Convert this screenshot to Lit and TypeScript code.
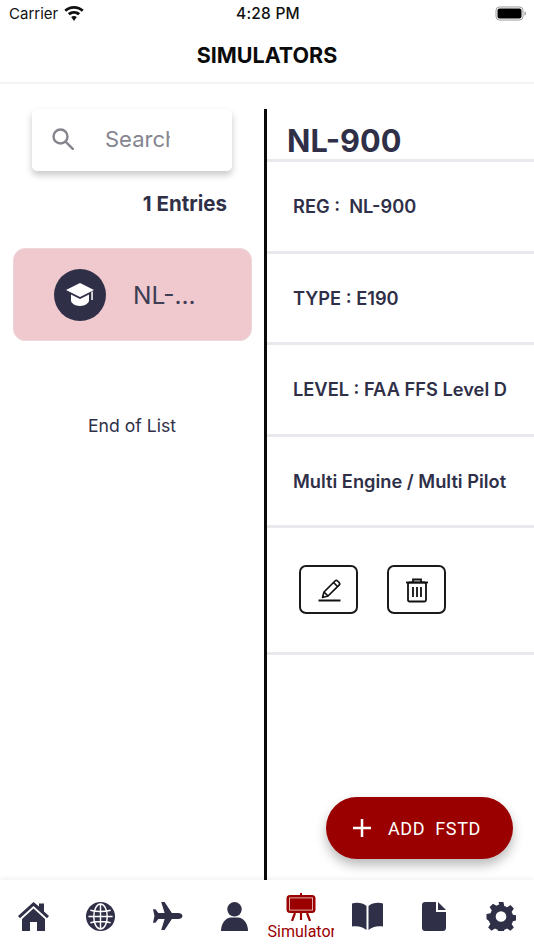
import { LitElement, html, css, svg } from "lit";
import { customElement } from "lit/decorators.js";

const navy = "#2f3048";

@customElement("app-root")
export class AppRoot extends LitElement {
  static styles = css`
    :host { display: flex; flex-direction: column; position: relative; width: 534px; height: 950px; background: #fff; overflow: hidden; font-family: Inter, "Liberation Sans", sans-serif; color: #2f3048; }
    .status { height: 30px; flex: none; box-sizing: border-box; display: grid; grid-template-columns: 1fr auto 1fr; align-items: center; padding: 0 7px 3px 9px; color: #111; font-size: 15px; }
    .carrier { display: flex; align-items: center; gap: 6px; }
    .time { font-weight: 500; font-size: 15.5px; letter-spacing: .2px; }
    .batt { justify-self: end; display: flex; }
    .header { height: 54px; flex: none; box-sizing: border-box; border-bottom: 2px solid #f3f3f4; display: flex; align-items: center; justify-content: center; font-weight: 700; font-size: 21.5px; color: #0b0b0b; padding-bottom: 3px; }
    .main { flex: 1; display: flex; min-height: 0; padding-top: 25px; }
    .left { width: 264px; flex: none; display: flex; flex-direction: column; }
    .search { margin: 0 0 0 32px; width: 200px; height: 62px; flex: none; box-sizing: border-box; border-radius: 5px; background: #fff; box-shadow: 0 4px 7px rgba(0,0,0,.22); display: flex; align-items: center; padding: 0 0 2px 20px; gap: 31px; }
    .search-text { width: 65px; overflow: hidden; white-space: nowrap; color: #85858f; font-size: 22px; }
    .count { margin: 20px 37px 0 0; text-align: right; font-weight: 700; font-size: 20.5px; line-height: 25px; }
    .card { margin: 32px 0 0 13px; width: 239px; height: 93px; flex: none; box-sizing: border-box; border-radius: 12px; background: #efc9ce; border: 1px solid #eed5d8; display: flex; align-items: center; padding-left: 40px; gap: 27px; }
    .avatar { width: 52px; height: 52px; border-radius: 50%; background: #2f3048; display: flex; align-items: center; justify-content: center; }
    .card-name { font-size: 24.5px; color: #3d3d54; }
    .end { margin-top: 74px; text-align: center; font-size: 17.6px; line-height: 22px; }
    .right { flex: 1; border-left: 3px solid #0a0a0a; display: flex; flex-direction: column; min-width: 0; }
    .title { height: 53px; flex: none; box-sizing: border-box; border-bottom: 3px solid #e8e9ed; font-size: 30.7px; font-weight: 700; padding-left: 20px; line-height: 64px; overflow: hidden; }
    .row { height: 91.5px; flex: none; box-sizing: border-box; border-bottom: 3px solid #e8e9ed; display: flex; align-items: center; padding-left: 26px; font-weight: 600; font-size: 18.25px; white-space: nowrap; }
    .actions { height: 126.5px; flex: none; box-sizing: border-box; border-bottom: 3px solid #e8e9ed; display: flex; gap: 29px; padding: 37px 0 0 32px; }
    .btn { width: 59px; height: 49px; box-sizing: border-box; border: 2px solid #1a1a1a; border-radius: 7px; display: flex; align-items: center; justify-content: center; background: #fff; }
    .tabs { height: 70px; flex: none; box-sizing: border-box; background: #fff; box-shadow: 0 -2px 4px rgba(0,0,0,.05); display: grid; grid-template-columns: repeat(8, 66.75px); padding-left: .5px; }
    .tab { display: flex; flex-direction: column; align-items: center; justify-content: flex-start; padding-top: 22px; overflow: hidden; }
    .tab.active { padding-top: 13px; color: #9b0000; font-size: 16px; font-family: Roboto, sans-serif; line-height: 17px; }
    .tab.active svg { flex: none; }
    .tab.active span { display: block; width: 66.75px; margin-top: 2px; overflow: hidden; white-space: nowrap; text-align: left; }
    .fab { position: absolute; left: 326px; top: 797px; width: 187px; height: 62px; border-radius: 31px; background: #9b0000; color: #fff; box-shadow: 0 6px 12px rgba(0,0,0,.28); display: flex; align-items: center; padding-left: 27px; box-sizing: border-box; gap: 17px; font-family: Roboto, sans-serif; font-size: 18px; font-weight: 400; letter-spacing: .6px; white-space: pre; }
  `;

  render() {
    return html`
      <div class="status">
        <div class="carrier">Carrier
          <svg width="20" height="15" viewBox="0 0 20 15"><path fill="#111" d="M10 0C6.300 0 2.900 1.400.3 3.800l1.900 2C4.300 3.900 7 2.800 10 2.800s5.700 1.100 7.800 3l1.900-2C17.100 1.400 13.700 0 10 0zm0 5c-2.300 0-4.500.9-6.100 2.300l1.900 2C7 8.300 8.400 7.700 10 7.700s3 .6 4.200 1.600l1.900-2C14.500 5.900 12.300 5 10 5zm0 5c-1.100 0-2.100.4-2.800 1L10 15l2.800-4c-.7-.6-1.700-1-2.800-1z"/></svg>
        </div>
        <div class="time">4:28 PM</div>
        <div class="batt">
          <svg width="32" height="15" viewBox="0 0 32 15"><rect x="1" y="1" width="27" height="13" rx="3.500" fill="none" stroke="#999" stroke-width="1"/><rect x="2.500" y="2.500" width="24" height="10" rx="2" fill="#000"/><path d="M29.500 5.500c1 .3 1.500 1 1.500 2s-.5 1.700-1.500 2z" fill="#999"/></svg>
        </div>
      </div>
      <div class="header">SIMULATORS</div>
      <div class="main">
        <div class="left">
          <div class="search">
            <svg width="22" height="22" viewBox="0 0 22 22" fill="none" stroke="#85858f" stroke-width="2.400"><circle cx="8.500" cy="8.500" r="7"/><path d="M13.800 13.800l7 7" stroke-linecap="round"/></svg>
            <div class="search-text">Search</div>
          </div>
          <div class="count">1 Entries</div>
          <div class="card">
            <div class="avatar">
              <svg width="28" height="23" viewBox="0 0 28 23" fill="#fff"><path d="M14 0L0 7l14 7 14-7z"/><path d="M5 11.500v6c0 2.500 4 5.500 9 5.500s9-3 9-5.500v-6l-9 4.500z"/><path d="M25.300 8.500h1.500V17h-1.500z"/></svg>
            </div>
            <div class="card-name">NL-...</div>
          </div>
          <div class="end">End of List</div>
        </div>
        <div class="right">
          <div class="title">NL-900</div>
          <div class="row">REG :&nbsp; NL-900</div>
          <div class="row">TYPE : E190</div>
          <div class="row">LEVEL : FAA FFS Level D</div>
          <div class="row">Multi Engine / Multi Pilot</div>
          <div class="actions">
            <div class="btn">
              <svg width="26" height="26" viewBox="0 0 26 26" fill="none" stroke="#111" stroke-width="1.700"><path d="M6.500 20.500l1.500-5.500L19 4c.8-.8 1.800-.8 2.600 0l1.500 1.500c.8.800.8 1.800 0 2.600L12 19z" stroke-linejoin="round"/><path d="M17.500 5.500l4 4M8 15l4 4"/><path d="M2.500 23.500h22" stroke-width="2"/></svg>
            </div>
            <div class="btn">
              <svg width="24" height="26" viewBox="0 0 24 26" fill="none" stroke="#111" stroke-width="1.800"><path d="M1 5.500h22"/><path d="M8 5V2.500h8V5"/><rect x="3" y="5.500" width="18" height="19" rx="1.500"/><path d="M8 10v10M12 10v10M16 10v10"/></svg>
            </div>
          </div>
        </div>
      </div>
      <div class="tabs">
        ${this.tab(svg`<path d="M15.500 0L0 14l2 2.200L15.500 4 29 16.200l2-2.200-5-4.500V1.500h-5v3z"/><path d="M15.500 6.500L4 17v12h8v-9h7v9h8V17z"/>`, "0 0 31 29", 31, 29)}
        ${this.globe()}
        ${this.tab(svg`<path d="M31 14.500c0-2-2-3-4.500-3h-6.500L12.500 0H9l3.500 11.500H6L3 7.500H.5L2 14.500.5 21.500H3l3-4h6.500L9 29h3.500L20 17.500h6.500c2.500 0 4.500-1 4.500-3z"/>`, "0 0 31 29", 31, 28)}
        ${this.tab(svg`<circle cx="13.500" cy="7.300" r="7.200"/><path d="M0 29c0-8 5-13.500 10-13.500h7c5 0 10 5.500 10 13.500z"/>`, "0 0 27 29", 27, 29)}
        <div class="tab active">
          <svg width="30" height="28" viewBox="0 0 30 28"><path d="M14 0h2v3h-2z" fill="#9b0000"/><rect x="1" y="2.500" width="28" height="17" rx="2.500" fill="#9b0000" stroke="#9b0000"/><rect x="3.400" y="4.900" width="23.200" height="12.200" fill="#9b0000" stroke="#f5d5d5" stroke-width=".8"/><path d="M9 20l-3 8M21 20l3 8M15 20v7" stroke="#9b0000" stroke-width="2.200"/></svg>
          <span>Simulator</span>
        </div>
        ${this.tab(svg`<path d="M14.500 4C11 1 5 0 0 1.500v23C5 23.500 11 24.500 14.500 28z"/><path d="M16.500 4c3.500-3 9.500-4 14.500-2.500v23C26 23.500 20 24.500 16.500 28z"/>`, "0 0 31 28", 31, 28)}
        ${this.tab(svg`<path d="M14 0H3C1.300 0 0 1.300 0 3v23c0 1.700 1.300 3 3 3h18c1.700 0 3-1.300 3-3V10H14z"/><path d="M16 0v8h8z"/>`, "0 0 24 29", 24, 29)}
        ${this.tab(svg`<path fill-rule="evenodd" d="M12.500 0h5l.9 4.200c1 .3 1.900.7 2.800 1.300l3.600-2.300 3.500 3.500-2.300 3.600c.5.900 1 1.800 1.300 2.800l4.200.9v5l-4.200.9c-.3 1-.7 1.900-1.300 2.800l2.300 3.600-3.500 3.500-3.600-2.300c-.9.500-1.800 1-2.800 1.300l-.9 4.200h-5l-.9-4.200c-1-.3-1.900-.7-2.800-1.300l-3.600 2.300-3.500-3.500 2.300-3.600c-.5-.9-1-1.800-1.300-2.800L0 17.500v-5l4.200-.9c.3-1 .7-1.900 1.300-2.800L3.200 5.200l3.500-3.500 3.600 2.300c.9-.5 1.800-1 2.800-1.300zM15 9.500a5.500 5.500 0 100 11 5.500 5.500 0 000-11z"/>`, "0 0 30 30", 30, 29)}
      </div>
      <div class="fab">
        <svg width="18" height="18" viewBox="0 0 18 18" stroke="#fff" stroke-width="2.500"><path d="M9 0v18M0 9h18"/></svg>
        <span>ADD  FSTD</span>
      </div>
    `;
  }

  tab(content: unknown, vb: string, w: number, h: number) {
    return html`<div class="tab"><svg width=${w} height=${h} viewBox=${vb} fill=${navy}>${content}</svg></div>`;
  }

  globe() {
    return html`<div class="tab"><svg width="29" height="29" viewBox="0 0 30 30"><circle cx="15" cy="15" r="15" fill=${navy}/><g fill="none" stroke="#fff" stroke-width="1.500"><ellipse cx="15" cy="15" rx="7" ry="13"/><path d="M15 2v26M2.500 15h25M4.500 8.500c6 1.500 15 1.500 21 0M4.500 21.500c6-1.500 15-1.500 21 0"/></g></svg></div>`;
  }
}
